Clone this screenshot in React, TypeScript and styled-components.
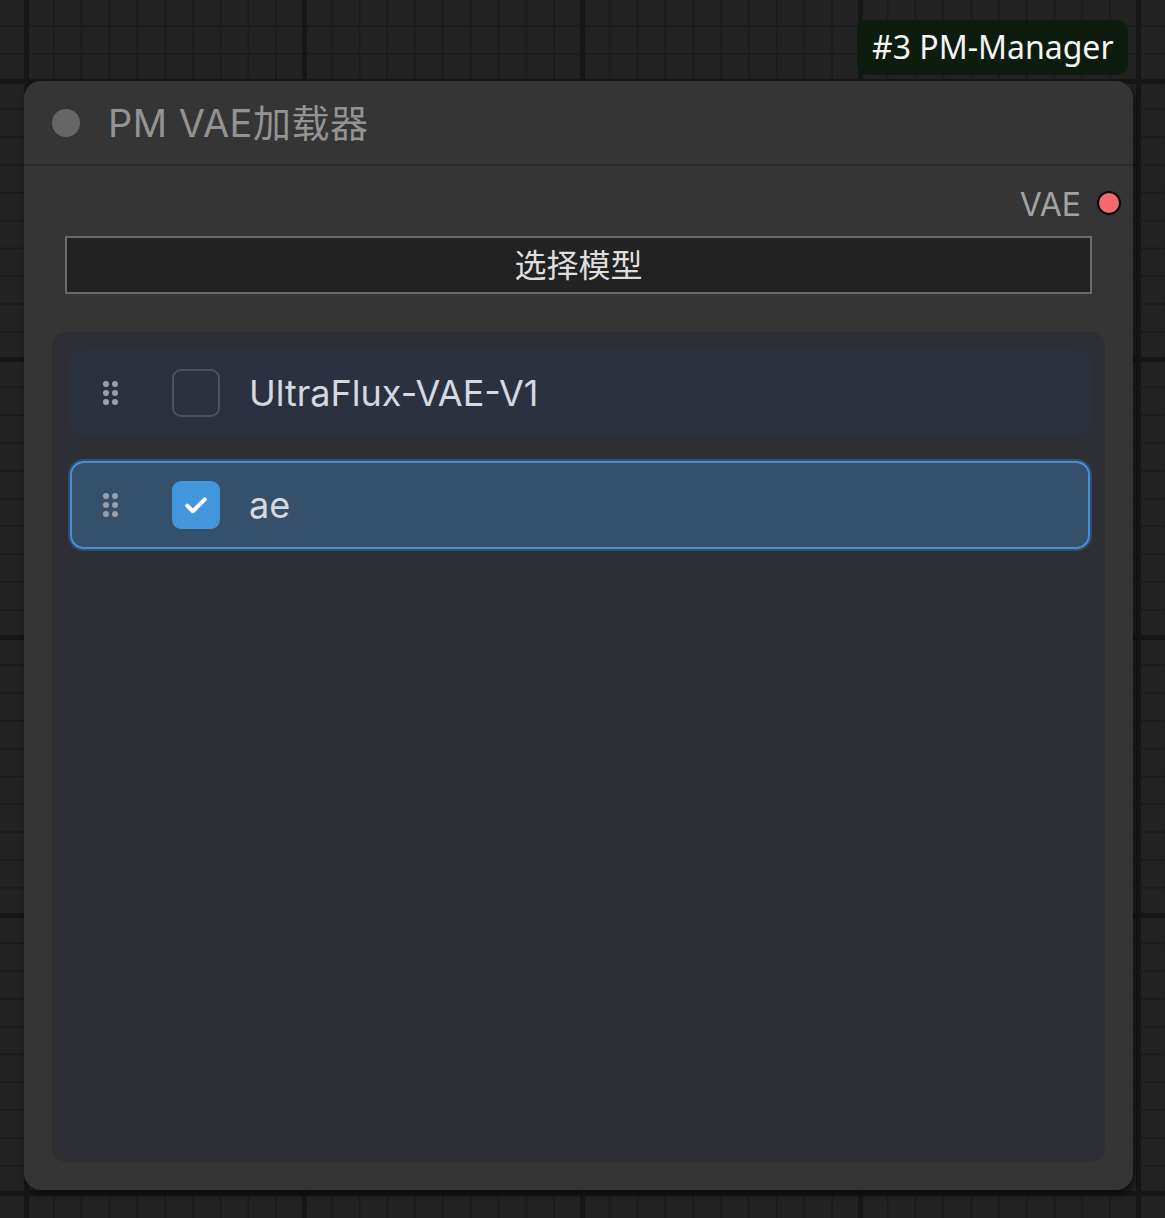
import React from 'react';
import styled, { createGlobalStyle } from 'styled-components';

const GlobalStyle = createGlobalStyle`
	html, body {
		margin: 0;
		padding: 0;
	}

	body {
		width: 1165px;
		height: 1218px;
		overflow: hidden;
		background-color: #222222;
		background-image:
			linear-gradient(to right, #161616 0 5px, transparent 5px),
			linear-gradient(to bottom, #161616 0 5px, transparent 5px),
			linear-gradient(to right, #1b1b1b 0 2px, transparent 2px),
			linear-gradient(to bottom, #1b1b1b 0 2px, transparent 2px);
		background-size: 278px 278px, 278px 278px, 27.8px 27.8px, 27.8px 27.8px;
		background-position: 24px 0, 0 79px, 25px 25px, 25px 25px;
		font-family: Inter, 'Noto Sans', 'Noto Sans CJK SC', sans-serif;
	}
`;

const Canvas = styled.div`
	position: relative;
	width: 1165px;
	height: 1218px;
	padding: 81px 32px 0 24px;
	box-sizing: border-box;
`;

const Badge = styled.div`
	position: absolute;
	top: 20px;
	left: 857px;
	height: 55px;
	padding: 0 14px 2px 15px;
	box-sizing: border-box;
	display: flex;
	align-items: center;
	background: #0e1c10;
	border-radius: 11px;
	color: #f4f4f4;
	font-family: 'Noto Sans', 'Open Sans', sans-serif;
	font-size: 32px;
	white-space: nowrap;
`;

const Node = styled.div`
	width: 1109px;
	height: 1109px;
	background: #353535;
	border-radius: 17px;
	box-shadow: 2px 4px 6px rgba(0, 0, 0, 0.55);
	display: flex;
	flex-direction: column;
	overflow: hidden;
`;

const TitleBar = styled.div`
	height: 83px;
	flex-shrink: 0;
	display: flex;
	align-items: center;
	gap: 28px;
	padding-left: 28px;
	border-bottom: 2px solid #2b2b2b;
`;

const StatusDot = styled.div`
	width: 28px;
	height: 28px;
	border-radius: 50%;
	background: #666666;
`;

const Title = styled.div`
	color: #939393;
	font-size: 38px;
	font-family: Inter, 'Noto Sans CJK SC', sans-serif;
	letter-spacing: 0.5px;
	margin-top: -5px;
`;

const Body = styled.div`
	flex: 1;
	display: flex;
	flex-direction: column;
	padding: 16px 28px 28px 28px;
`;

const OutputRow = styled.div`
	display: flex;
	justify-content: flex-end;
	align-items: center;
	gap: 16px;
	height: 44px;
	margin-right: -16px;
	margin-bottom: 2px;
`;

const OutputLabel = styled.span`
	color: #a3a3a3;
	font-size: 32px;
	font-family: Inter, sans-serif;
`;

const OutputPin = styled.span`
	width: 20px;
	height: 20px;
	border-radius: 50%;
	background: #f56b6b;
	border: 2px solid #0a0a0a;
	margin-top: -3px;
`;

const SelectButton = styled.button`
	margin: 8px 13px 0 13px;
	height: 58px;
	background: #222222;
	border: 2px solid #6b6b6b;
	color: #dedede;
	font-size: 32px;
	font-family: 'Noto Sans CJK SC', sans-serif;
	padding: 0 0 5px 0;
	cursor: pointer;
`;

const ListPanel = styled.div`
	flex: 1;
	margin-top: 38px;
	background: #2e2f34;
	border-radius: 14px;
	padding: 18px 13px 18px 16px;
	display: flex;
	flex-direction: column;
	gap: 25px;
`;

const Item = styled.div<{ $selected?: boolean }>`
	height: ${(p) => (p.$selected ? '88px' : '86px')};
	margin: 0 2px;
	display: flex;
	align-items: center;
	border-radius: 14px;
	box-sizing: border-box;
	padding-left: 31px;
	background: ${(p) => (p.$selected ? '#34506b' : '#2c3140')};
	border: 2px solid ${(p) => (p.$selected ? '#4a8fd3' : 'transparent')};
	box-shadow: ${(p) => (p.$selected ? '0 0 0 2px #2f4f72' : 'none')};
`;

const Handle = styled.div`
	width: 18px;
	display: grid;
	grid-template-columns: repeat(2, 6px);
	gap: 3px;
	margin-right: 51px;

	span {
		width: 6px;
		height: 6px;
		border-radius: 50%;
		background: #9aa0aa;
	}
`;

const Box = styled.div<{ $checked?: boolean }>`
	width: 48px;
	height: 48px;
	box-sizing: border-box;
	border-radius: 9px;
	border: 2px solid ${(p) => (p.$checked ? '#4296dc' : '#4b515d')};
	background: ${(p) => (p.$checked ? '#4296dc' : 'transparent')};
	display: flex;
	align-items: center;
	justify-content: center;
	margin-right: 29px;
`;

const ItemName = styled.span`
	color: #d4d8e0;
	font-size: 36px;
	font-family: Inter, sans-serif;
`;

const items = [
	{ name: 'UltraFlux-VAE-V1', checked: false },
	{ name: 'ae', checked: true },
];

const DragHandle = () => (
	<Handle>
		{Array.from({ length: 6 }).map((_, i) => (
			<span key={i} />
		))}
	</Handle>
);

const Check = () => (
	<svg width="30" height="30" viewBox="0 0 24 24" fill="none" stroke="#ffffff" strokeWidth="3.2" strokeLinecap="round" strokeLinejoin="round">
		<path d="M5 12.5l4.5 4.5L19 7.5" />
	</svg>
);

const App = () => {
	return (
		<>
			<GlobalStyle />
			<Canvas>
				<Badge>#3 PM-Manager</Badge>
				<Node>
					<TitleBar>
						<StatusDot />
						<Title>PM VAE加载器</Title>
					</TitleBar>
					<Body>
						<OutputRow>
							<OutputLabel>VAE</OutputLabel>
							<OutputPin />
						</OutputRow>
						<SelectButton>选择模型</SelectButton>
						<ListPanel>
							{items.map((item) => (
								<Item key={item.name} $selected={item.checked}>
									<DragHandle />
									<Box $checked={item.checked}>{item.checked && <Check />}</Box>
									<ItemName>{item.name}</ItemName>
								</Item>
							))}
						</ListPanel>
					</Body>
				</Node>
			</Canvas>
		</>
	);
};

export default App;
